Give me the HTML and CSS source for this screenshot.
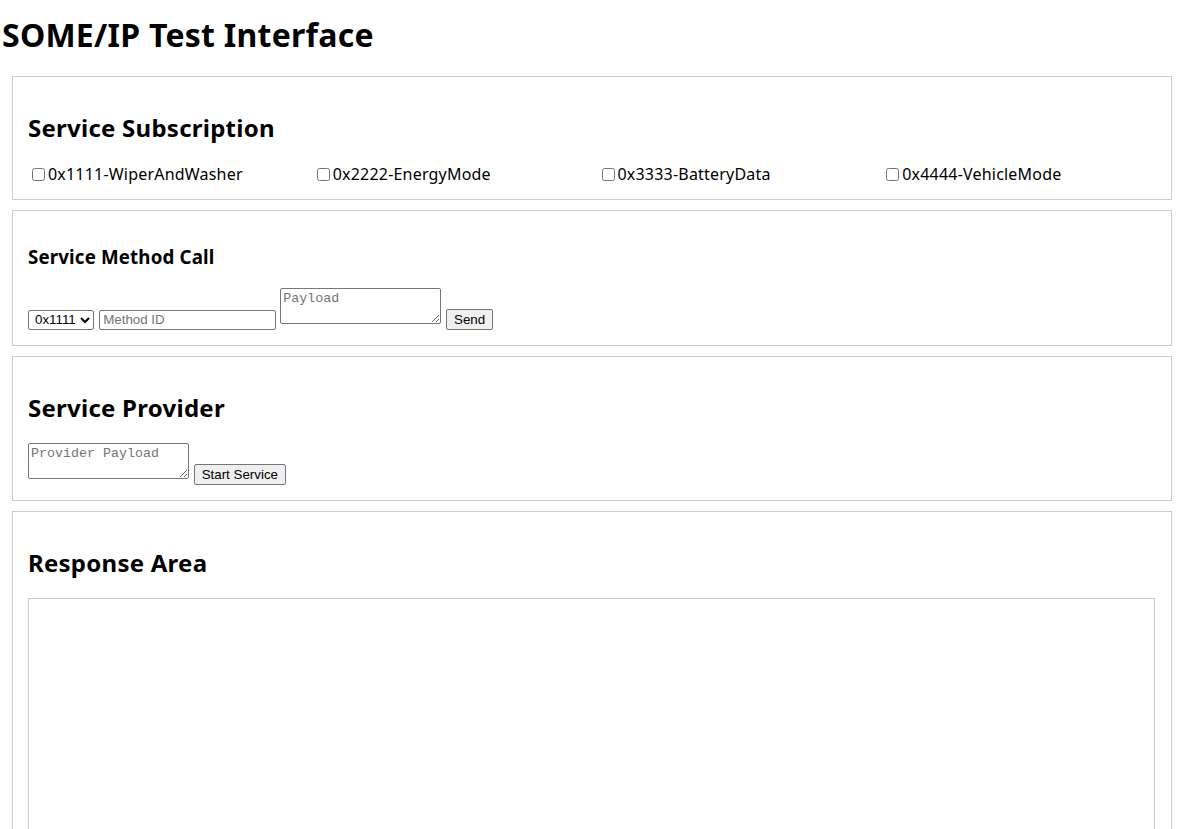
FILE: index.html
```html
<!DOCTYPE html>
<html lang="en">
<head>
<meta charset="utf-8">
<title>SOME/IP Test Interface</title>
<link rel="stylesheet" href="styles.css">
</head>
<body>
<h1 class="title">SOME/IP Test Interface</h1>

<section class="panel">
  <h2 class="panel-title">Service Subscription</h2>
  <div class="sub-grid">
    <label class="sub-item"><input type="checkbox" class="chk">0x1111-WiperAndWasher</label>
    <label class="sub-item"><input type="checkbox" class="chk">0x2222-EnergyMode</label>
    <label class="sub-item"><input type="checkbox" class="chk">0x3333-BatteryData</label>
    <label class="sub-item"><input type="checkbox" class="chk">0x4444-VehicleMode</label>
  </div>
</section>

<section class="panel">
  <h3 class="panel-subtitle">Service Method Call</h3>
  <div class="row">
    <select class="ctl sel"><option>0x1111</option><option>0x2222</option><option>0x3333</option><option>0x4444</option></select>
    <input type="text" class="ctl txt" placeholder="Method ID">
    <textarea class="ctl area" placeholder="Payload"></textarea>
    <button class="ctl btn">Send</button>
  </div>
</section>

<section class="panel">
  <h2 class="panel-title">Service Provider</h2>
  <div class="row">
    <textarea class="ctl area" placeholder="Provider Payload"></textarea>
    <button class="ctl btn">Start Service</button>
  </div>
</section>

<section class="panel">
  <h2 class="panel-title">Response Area</h2>
  <div class="response"></div>
</section>
</body>
</html>
```

FILE: styles.css
```css
html, body {
  margin: 0;
  padding: 0;
  background: #fff;
  color: #000;
  font-family: "Noto Sans", "Open Sans", sans-serif;
}

.title {
  font-size: 32px;
  font-weight: 700;
  line-height: 42px;
  letter-spacing: 0.25px;
  margin: 14px 0 20px 0;
  padding-left: 2px;
}

.panel {
  border: 1px solid #cccccc;
  margin: 0 14px 10px 12px;
  padding: 16px 16px 15px 15px;
}

.panel-title {
  font-size: 24px;
  font-weight: 700;
  line-height: 32px;
  letter-spacing: 0.25px;
  margin: 19px 0 19px 0;
}

.panel-subtitle {
  font-size: 18.72px;
  font-weight: 700;
  line-height: 25px;
  letter-spacing: 0.15px;
  margin: 17px 0 19px 0;
}

.sub-grid {
  display: grid;
  grid-template-columns: repeat(4, 1fr);
  column-gap: 12px;
  padding-top: 2px;
}

.sub-item {
  font-size: 16px;
  line-height: 19px;
  letter-spacing: 0.2px;
  display: flex;
  align-items: center;
  white-space: nowrap;
}

.chk {
  width: 13px;
  height: 13px;
  margin: 3px 3px 3px 4px;
}

.row {
  line-height: 20px;
}

.ctl {
  font-family: "Liberation Sans", Arial, sans-serif;
  font-size: 13.33px;
  vertical-align: baseline;
  margin: 0;
}

.sel + .txt {
  margin-left: 1px;
}

.area + .btn {
  margin-left: 0.5px;
}

.sel {
  width: 66px;
  height: 20px;
  border: 1px solid #767676;
  border-radius: 2px;
  background: #fff;
  color: #000;
  padding: 0 0 0 2px;
}

.txt {
  width: 177px;
  height: 20px;
  box-sizing: border-box;
  border: 1px solid #767676;
  border-radius: 2px;
  padding: 1px 3px;
}

.txt::placeholder {
  color: #757575;
}

.area {
  width: 161px;
  height: 36px;
  box-sizing: border-box;
  border: 1px solid #767676;
  border-radius: 2px;
  padding: 2px;
  font-family: "Liberation Mono", "Courier New", monospace;
  font-size: 13.33px;
  line-height: 15px;
  resize: both;
}

.area::placeholder {
  color: #757575;
}

.btn {
  height: 21px;
  box-sizing: border-box;
  border: 1px solid #767676;
  border-radius: 2px;
  background: #efefef;
  color: #000;
  padding: 0 7px;
}

.response {
  border: 1px solid #cccccc;
  height: 300px;
}
```
